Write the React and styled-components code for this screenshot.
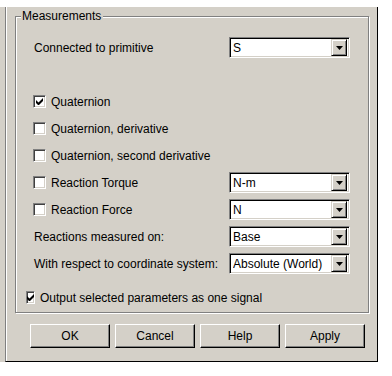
import React from "react";
import styled, { createGlobalStyle } from "styled-components";

const GlobalStyle = createGlobalStyle`
  html, body {
    margin: 0;
    padding: 0;
    background: #ffffff;
  }
  body {
    font-family: "Liberation Sans", Arial, sans-serif;
    font-size: 12px;
    color: #000;
  }
`;

const Outer = styled.div`
  margin-top: 7px;
  width: 377px;
  background: #d4d0c8;
  border-right: 1px solid #000;
  padding-left: 5px;
  box-sizing: border-box;
  width: 378px;
`;

const Frame = styled.div`
  border-left: 1px solid #808080;
  border-bottom: 1px solid #000;
  box-shadow: inset 1px 0 0 #fff;
  padding: 9px 0 13px 9px;
`;

const Group = styled.div`
  position: relative;
  width: 354px;
  box-sizing: border-box;
  border: 1px solid #808080;
  box-shadow: 1px 1px 0 #fff, inset 1px 1px 0 #fff;
  padding: 17px 0 1px 17px;
`;

const Legend = styled.span`
  position: absolute;
  top: -8px;
  left: 5px;
  padding: 0 2px 0 1px;
  background: #d4d0c8;
  line-height: 14px;
`;

const Row = styled.div`
  display: grid;
  grid-template-columns: 196px 121px;
  align-items: center;
  height: 27px;
  margin-left: ${(p) => p.$indent || 0}px;
  margin-top: ${(p) => p.$gap || 0}px;
`;

const Label = styled.span`
  padding-left: 1px;
  white-space: nowrap;
`;

const CheckLabel = styled.label`
  display: flex;
  align-items: center;
  gap: 5px;
  white-space: nowrap;
`;

const Box = styled.span`
  width: 13px;
  height: 13px;
  box-sizing: border-box;
  background: #fff;
  border: 1px solid;
  border-color: #808080 #fff #fff #808080;
  box-shadow: inset 1px 1px 0 #404040, inset -1px -1px 0 #d4d0c8;
  display: flex;
  align-items: center;
  justify-content: center;
`;

const Select = styled.div`
  height: 21px;
  box-sizing: border-box;
  background: #fff;
  border: 1px solid;
  border-color: #808080 #fff #fff #808080;
  box-shadow: inset 1px 1px 0 #000, inset -1px -1px 0 #d4d0c8;
  display: flex;
  align-items: center;
  padding: 2px 2px 2px 3px;
`;

const SelectText = styled.span`
  flex: 1;
  white-space: nowrap;
  overflow: hidden;
`;

const ArrowButton = styled.span`
  width: 16px;
  height: 17px;
  box-sizing: border-box;
  background: #d4d0c8;
  border: 1px solid;
  border-color: #d4d0c8 #000 #000 #d4d0c8;
  box-shadow: inset 1px 1px 0 #fff, inset -1px -1px 0 #808080;
  display: flex;
  align-items: center;
  justify-content: center;
`;

const Buttons = styled.div`
  display: flex;
  gap: 5px;
  margin: 11px 0 0 15px;
`;

const Button = styled.button`
  width: 80px;
  height: 24px;
  box-sizing: border-box;
  background: #d4d0c8;
  font: inherit;
  color: #000;
  border: 1px solid;
  border-color: #fff #000 #000 #fff;
  box-shadow: inset -1px -1px 0 #808080;
  padding: 0;
`;

const Check = () => (
  <svg width="7" height="7" viewBox="0 0 7 7">
    <path d="M0 2v3l2 2h1l4-4V0L2.5 4.5z" fill="#000" />
  </svg>
);

const Checkbox = ({ checked, children }) => (
  <CheckLabel>
    <Box>{checked && <Check />}</Box>
    {children}
  </CheckLabel>
);

const Dropdown = ({ value }) => (
  <Select>
    <SelectText>{value}</SelectText>
    <ArrowButton>
      <svg width="7" height="4" viewBox="0 0 7 4">
        <path d="M0 0h7L3.5 4z" fill="#000" />
      </svg>
    </ArrowButton>
  </Select>
);

export default function App() {
  return (
    <>
      <GlobalStyle />
      <Outer>
        <Frame>
          <Group>
            <Legend>Measurements</Legend>
            <Row>
              <Label>Connected to primitive</Label>
              <Dropdown value="S" />
            </Row>
            <Row />
            <Row>
              <Checkbox checked>Quaternion</Checkbox>
            </Row>
            <Row>
              <Checkbox>Quaternion, derivative</Checkbox>
            </Row>
            <Row>
              <Checkbox>Quaternion, second derivative</Checkbox>
            </Row>
            <Row>
              <Checkbox>Reaction Torque</Checkbox>
              <Dropdown value="N-m" />
            </Row>
            <Row>
              <Checkbox>Reaction Force</Checkbox>
              <Dropdown value="N" />
            </Row>
            <Row>
              <Label>Reactions measured on:</Label>
              <Dropdown value="Base" />
            </Row>
            <Row>
              <Label>With respect to coordinate system:</Label>
              <Dropdown value="Absolute (World)" />
            </Row>
            <Row $indent={-7} $gap={7}>
              <Checkbox checked>Output selected parameters as one signal</Checkbox>
            </Row>
          </Group>
          <Buttons>
            <Button>OK</Button>
            <Button>Cancel</Button>
            <Button>Help</Button>
            <Button>Apply</Button>
          </Buttons>
        </Frame>
      </Outer>
    </>
  );
}
